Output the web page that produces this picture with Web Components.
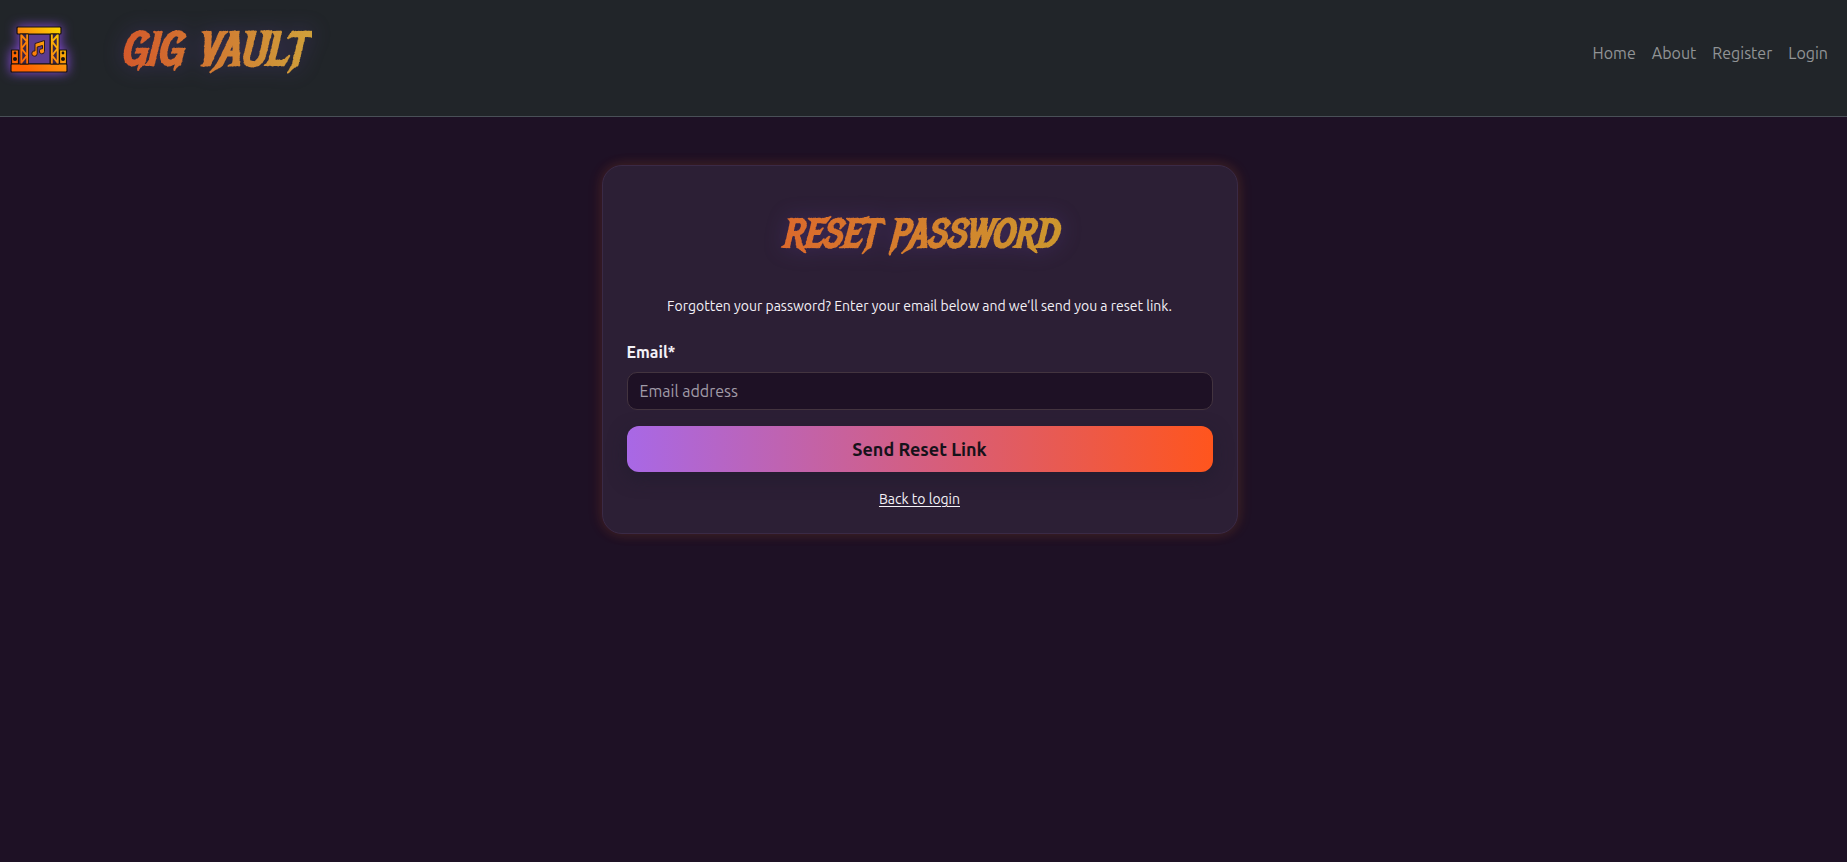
<!DOCTYPE html>
<html lang="en">
<head>
<meta charset="utf-8">
<title>Gig Vault – Reset Password</title>
<style>
  html { background: #1e1125; }
  body { margin: 0; font: 16px/24px Ubuntu, "Noto Sans", sans-serif; color: #f4f1f7; }
</style>
</head>
<body>
<site-header>
  <nav-link href="#home">Home</nav-link>
  <nav-link href="#about">About</nav-link>
  <nav-link href="#register">Register</nav-link>
  <nav-link href="#login">Login</nav-link>
</site-header>
<auth-card heading="RESET PASSWORD">
  <span slot="intro">Forgotten your password? Enter your email below and we’ll send you a reset link.</span>
  <reset-form></reset-form>
</auth-card>

<script>
const define = (name, html, setup) => customElements.define(name, class extends HTMLElement {
  constructor() {
    super();
    this.attachShadow({ mode: "open" }).innerHTML = html;
  }
  connectedCallback() { if (setup) setup(this, this.shadowRoot); }
});

define("gig-logo", `
<style>
  :host { display: block; width: 58px; height: 48px; filter: drop-shadow(0 0 6px #8a4be0); }
  svg { display: block; width: 100%; height: 100%; }
</style>
<svg viewBox="0 0 58 48" role="img" aria-label="Stage">
  <defs><linearGradient id="g" gradientUnits="userSpaceOnUse" x1="14" y1="42" x2="48" y2="4">
    <stop offset="0" stop-color="#ff6200"/><stop offset=".5" stop-color="#fb8c0c"/><stop offset="1" stop-color="#fdd000"/></linearGradient></defs>
  <path d="M18 8h22v30H18z" fill="#5d3c8e" stroke="#16100f"/>
  <g fill="url(#g)" stroke="#16100f" stroke-width="1.2" stroke-linejoin="round">
    <path d="M1.500 24h7v14h-7zM49.500 24h7v14h-7z"/>
    <rect x="7" y="1" width="44" height="7" rx="1"/>
    <rect x="1" y="38" width="56" height="8" rx="1"/>
  </g>
  <path d="M10 8h8.500v30H10zM40.500 8H49v30h-8.500z" fill="#3c2545" stroke="#16100f"/>
  <path d="M11.300 8.600v28.800M17.200 8.600v28.800M41.800 8.600v28.800M47.700 8.600v28.800M11.500 9.500l5.500 6-5.500 7 5.500 7-5.500 7M47.500 9.500l-5.500 6 5.500 7-5.500 7 5.500 7" fill="none" stroke="url(#g)" stroke-width="1.900"/>
  <g fill="#16100f"><circle cx="5" cy="27" r="1.400"/><circle cx="5" cy="33" r="2"/><circle cx="53" cy="27" r="1.400"/><circle cx="53" cy="33" r="2"/></g>
  <path d="M25 17.500 34.500 14.500v11a2.600 2.600 0 1 1-2-2.800v-3.200l-5.300 1.500v6.800a2.700 2.700 0 1 1-2.200-2.900z" fill="url(#g)" stroke="#2a1620" stroke-width="1"/>
</svg>`);

define("display-title", `
<style>
  :host { display: inline-block; filter: drop-shadow(0 0 10px rgba(110, 70, 190, .3)); }
  .t { display: block; padding: 0 8px; font: italic 700 var(--title-size, 40px)/56px "Metal Mania", Lato, sans-serif; white-space: nowrap; background: linear-gradient(90deg, var(--from, #d4552a), var(--to, #cfa03a)); -webkit-background-clip: text; background-clip: text; color: transparent; }
</style>
<span class="t"><slot></slot></span>`);

define("nav-link", `
<style>
  :host { display: block; }
  a { color: #919496; text-decoration: none; }
</style>
<a><slot></slot></a>`, (el, root) => root.querySelector("a").href = el.getAttribute("href"));

define("site-header", `
<style>
  :host { display: block; background: #212529; border-bottom: 1px solid #495057; }
  header { display: flex; align-items: flex-start; min-height: 116px; box-sizing: border-box; padding: 22px 19px 0 10px; }
  .brand { display: flex; align-items: center; gap: 44px; color: inherit; text-decoration: none; }
  display-title { --title-size: 47px; }
  nav { display: flex; gap: 16px; margin: 19px 0 0 auto; }
</style>
<header>
  <a class="brand" href="#home"><gig-logo></gig-logo><display-title>GIG VAULT</display-title></a>
  <nav><slot></slot></nav>
</header>`);

define("reset-form", `
<style>
  :host { display: block; }
  form { display: flex; flex-direction: column; }
  label { font-weight: 600; margin-bottom: 8px; }
  input { font: inherit; color: #f4f1f7; background: #1e1125; border: 1px solid #43343f; border-radius: 10px; height: 38px; box-sizing: border-box; padding: 0 12px; margin: 0 0 16px; width: 100%; }
  input::placeholder { color: #a19ba8; opacity: 1; }
  button { font: 600 18px/24px Ubuntu, "Noto Sans", sans-serif; color: #16121a; height: 46px; border: 0; border-radius: 12px; background: linear-gradient(90deg, #a868e6, #ff551d); box-shadow: 0 6px 18px rgba(30, 26, 45, .6); }
  a { align-self: center; margin-top: 16px; font-size: 14px; line-height: 22px; color: inherit; text-underline-offset: 2px; }
</style>
<form>
  <label for="email">Email*</label>
  <input id="email" type="email" placeholder="Email address">
  <button type="button">Send Reset Link</button>
  <a href="#login">Back to login</a>
</form>`);

define("auth-card", `
<style>
  :host { display: block; padding: 48px 24px 48px 16px; }
  section { box-sizing: border-box; max-width: 636px; margin: 0 auto; padding: 40px 24px 23px; background: #2c1f35; border: 1px solid #3a2a46; border-radius: 20px; box-shadow: -2px 0 14px rgba(255, 80, 40, .1), 2px 0 14px rgba(255, 170, 40, .1); }
  h1 { margin: 0; padding-bottom: 34px; text-align: center; font-size: 40px; line-height: 56px; }
  display-title { display: block; width: max-content; margin: 0 auto; --title-size: 40px; --from: #dc682c; --to: #cc972e; }
  p { margin: 0 0 23px; text-align: center; font-size: 14px; line-height: 21px; }
</style>
<section>
  <h1><display-title></display-title></h1>
  <p><slot name="intro"></slot></p>
  <slot></slot>
</section>`, (el, root) => root.querySelector("display-title").textContent = el.getAttribute("heading"));
</script>
</body>
</html>
